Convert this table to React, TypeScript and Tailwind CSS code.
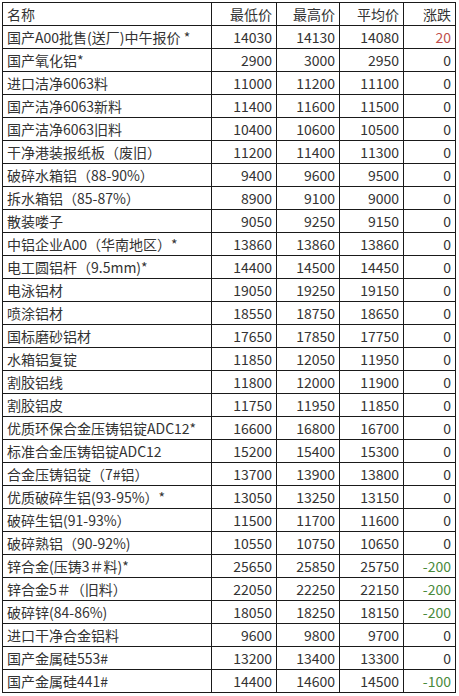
const rows: [string, string, string, string, string][] = [
  ["国产A00批售(送厂)中午报价 *", "14030", "14130", "14080", "20"],
  ["国产氧化铝*", "2900", "3000", "2950", "0"],
  ["进口洁净6063料", "11000", "11200", "11100", "0"],
  ["国产洁净6063新料", "11400", "11600", "11500", "0"],
  ["国产洁净6063旧料", "10400", "10600", "10500", "0"],
  ["干净港装报纸板（废旧）", "11200", "11400", "11300", "0"],
  ["破碎水箱铝（88-90%）", "9400", "9600", "9500", "0"],
  ["拆水箱铝（85-87%）", "8900", "9100", "9000", "0"],
  ["散装喽子", "9050", "9250", "9150", "0"],
  ["中铝企业A00（华南地区）*", "13860", "13860", "13860", "0"],
  ["电工圆铝杆（9.5mm)*", "14400", "14500", "14450", "0"],
  ["电泳铝材", "19050", "19250", "19150", "0"],
  ["喷涂铝材", "18550", "18750", "18650", "0"],
  ["国标磨砂铝材", "17650", "17850", "17750", "0"],
  ["水箱铝复锭", "11850", "12050", "11950", "0"],
  ["割胶铝线", "11800", "12000", "11900", "0"],
  ["割胶铝皮", "11750", "11950", "11850", "0"],
  ["优质环保合金压铸铝锭ADC12*", "16600", "16800", "16700", "0"],
  ["标准合金压铸铝锭ADC12", "15200", "15400", "15300", "0"],
  ["合金压铸铝锭（7#铝）", "13700", "13900", "13800", "0"],
  ["优质破碎生铝(93-95%）*", "13050", "13250", "13150", "0"],
  ["破碎生铝(91-93%）", "11500", "11700", "11600", "0"],
  ["破碎熟铝（90-92%)", "10550", "10750", "10650", "0"],
  ["锌合金(压铸3＃料)*", "25650", "25850", "25750", "-200"],
  ["锌合金5＃（旧料）", "22050", "22250", "22150", "-200"],
  ["破碎锌(84-86%)", "18050", "18250", "18150", "-200"],
  ["进口干净合金铝料", "9600", "9800", "9700", "0"],
  ["国产金属硅553#", "13200", "13400", "13300", "0"],
  ["国产金属硅441#", "14400", "14600", "14500", "-100"],
];

function changeColor(v: string) {
  if (v.startsWith("-")) return "text-[#4a8a3c]";
  if (v !== "0") return "text-[#c0504d]";
  return "text-[#333333]";
}

const cell = "border border-[#1a1a1a] h-[23px] p-0 leading-[22px] whitespace-nowrap";

export default function App() {
  return (
    <div
      className="w-[459px] h-[696px] bg-white pt-[2px] pl-[2px] text-[14px] text-[#333333]"
      style={{ fontFamily: '"Noto Sans CJK SC", "Noto Sans", sans-serif' }}
    >
      <table className="border-collapse table-fixed w-[453px]">
        <colgroup>
          <col className="w-[209px]" />
          <col className="w-[65px]" />
          <col className="w-[63px]" />
          <col className="w-[64px]" />
          <col className="w-[52px]" />
        </colgroup>
        <thead>
          <tr>
            <th className={`${cell} text-left font-normal pl-[4px]`}>名称</th>
            <th className={`${cell} text-right font-normal pr-[4px]`}>最低价</th>
            <th className={`${cell} text-right font-normal pr-[4px]`}>最高价</th>
            <th className={`${cell} text-right font-normal pr-[4px]`}>平均价</th>
            <th className={`${cell} text-right font-normal pr-[4px]`}>涨跌</th>
          </tr>
        </thead>
        <tbody>
          {rows.map((r) => (
            <tr key={r[0]}>
              <td className={`${cell} text-left pl-[4px]`}>{r[0]}</td>
              <td className={`${cell} text-right pr-[4px]`}>{r[1]}</td>
              <td className={`${cell} text-right pr-[4px]`}>{r[2]}</td>
              <td className={`${cell} text-right pr-[4px]`}>{r[3]}</td>
              <td className={`${cell} text-right pr-[4px] ${changeColor(r[4])}`}>{r[4]}</td>
            </tr>
          ))}
        </tbody>
      </table>
    </div>
  );
}
